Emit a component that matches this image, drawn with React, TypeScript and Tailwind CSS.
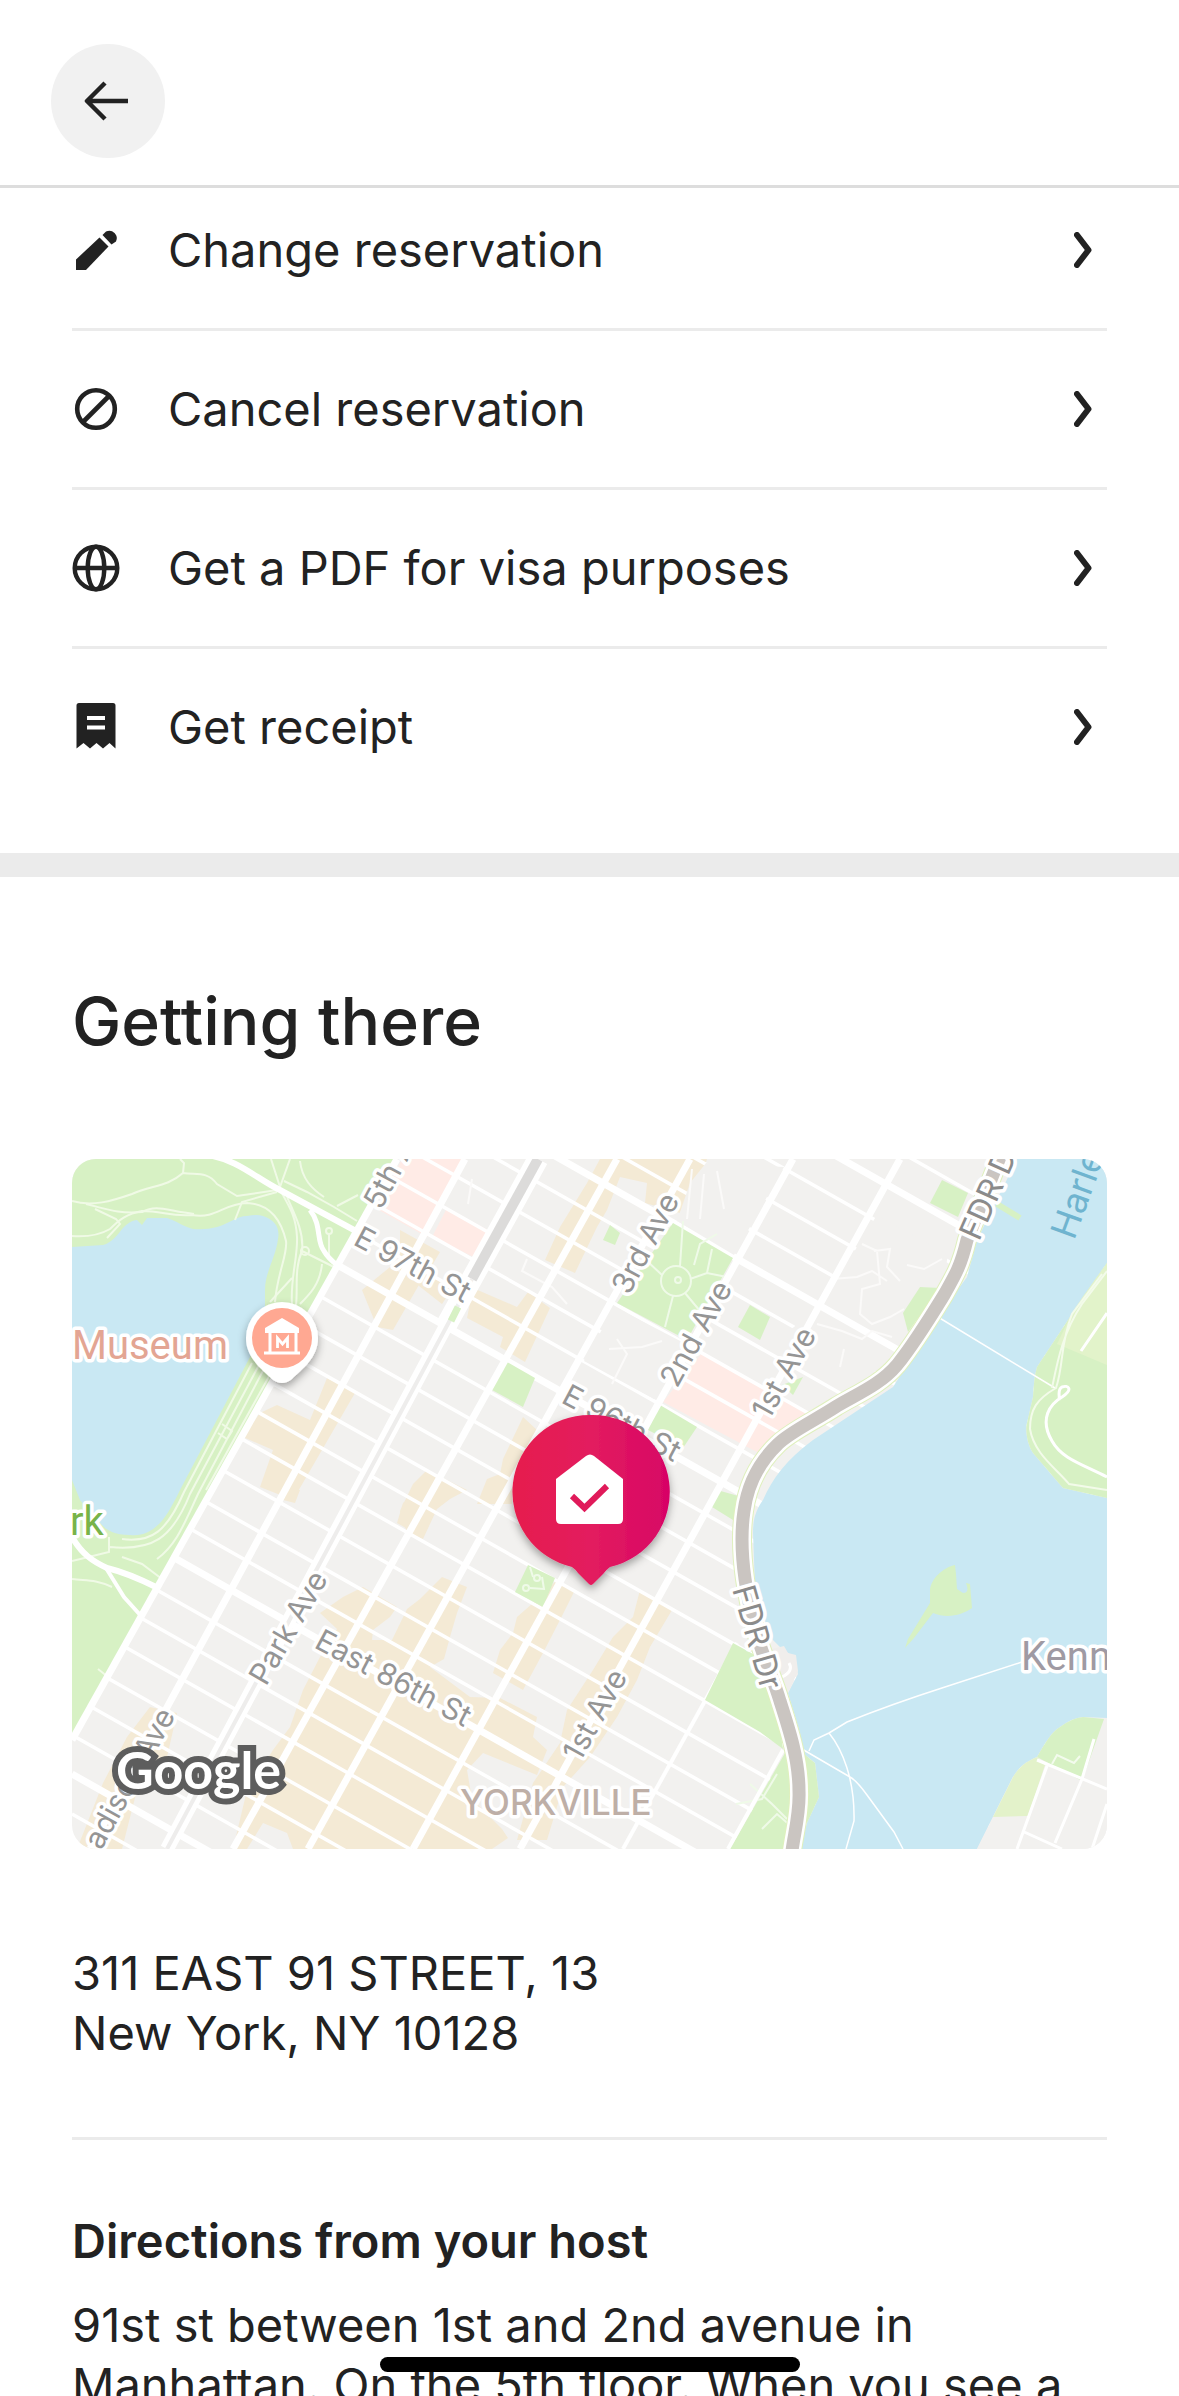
import type { ReactNode } from "react";

const PencilIcon = () => (
  <svg viewBox="0 0 48 48" className="h-12 w-12" fill="currentColor" aria-hidden="true">
    <path d="M4 44V33.500L27.500 11.500L36.500 20.500L14 44Z" />
    <path d="M30.500 9L34 5.500a7.500 7.500 0 0 1 10 10L39.500 18.500Z" />
  </svg>
);

const BlockIcon = () => (
  <svg viewBox="0 0 48 48" className="h-12 w-12" fill="none" stroke="currentColor" strokeWidth="4.600" aria-hidden="true">
    <circle cx="24" cy="24" r="18.800" />
    <path d="M37.500 10.500L10.500 37.500" />
  </svg>
);

const GlobeIcon = () => (
  <svg viewBox="0 0 48 48" className="h-12 w-12" fill="none" stroke="currentColor" strokeWidth="4.400" aria-hidden="true">
    <circle cx="24" cy="24" r="21.300" />
    <ellipse cx="24" cy="24" rx="8.300" ry="21.300" />
    <path d="M3 24H45" />
  </svg>
);

const ReceiptIcon = () => (
  <svg viewBox="0 0 48 48" className="h-12 w-12" aria-hidden="true">
    <path
      d="M4.500 2.500a2.500 2.500 0 0 1 2.500-2.500h34a2.500 2.500 0 0 1 2.500 2.500V45.500L37.500 40L31 45.500L24.500 40L18 45.500L11.500 40L4.500 45.500Z"
      fill="currentColor"
    />
    <path d="M15 15H33M15 24.500H33" stroke="#fff" strokeWidth="3.800" />
  </svg>
);

const ChevronIcon = () => (
  <svg viewBox="0 0 18 36" className="h-9 w-[18px] shrink-0" fill="none" stroke="currentColor" strokeWidth="6" strokeLinecap="round" strokeLinejoin="round" aria-hidden="true">
    <path d="M3 3L14.500 18L3 33" />
  </svg>
);

const actions: { icon: () => ReactNode; label: string }[] = [
  { icon: PencilIcon, label: "Change reservation" },
  { icon: BlockIcon, label: "Cancel reservation" },
  { icon: GlobeIcon, label: "Get a PDF for visa purposes" },
  { icon: ReceiptIcon, label: "Get receipt" },
];

// Cross streets, given as the height at which each one meets the left edge
const streets = [
  -475, -393, -353, -313, -240, -200, -162, -126, -87, -3, 35, 73, 111, 148,
  184, 226, 267, 303, 383, 420, 458, 499, 537, 576, 655,
];
const wideStreets = [-435, -276, -44, 341, 615];

const avenues = [
  "M393 0L18 690",
  "M545 0L161 690",
  "M618 0L236 690",
  "M721 0L341 690",
  "M828 0L448 690",
];

const commercial = [
  "318,108 348,124 321,171 305,168 290,131",
  "328,71 368,93 355,115 380,130 370,145 328,112",
  "401,129 445,148 456,133 478,149 453,203 428,188 431,178 395,159",
  "528,0 635,0 628,24 618,31 608,54 573,44 575,24 548,18 535,51 525,68 503,114 473,101 488,68 515,24",
  "255,219 283,234 221,341 188,328 201,291 171,278 188,254 205,246 238,261",
  "218,331 228,331 223,344 211,341",
  "451,258 465,271 458,285 440,315 440,345 405,345 415,320 428,315 431,300",
  "355,311 395,331 378,340 365,350 351,380 335,374 328,352 341,325",
  "348,331 331,344 325,364 348,377",
  "370,418 395,428 385,454 378,478 372,500 358,508 398,538 428,539 465,558 461,578 475,591 465,616 411,594 395,611 400,640 430,670 436,679 420,690 221,690 215,674 191,664 175,690 161,690 175,631 201,591 218,568 231,531 248,498 265,470 248,454 271,438 291,428 325,448 318,458 301,471 300,481 320,481 335,450 348,440",
  "485,421 503,431 488,461 471,494 451,531 421,514 428,491 441,474 445,458 461,444",
  "568,431 600,451 578,488 565,521 545,558 518,598 491,628 475,681 445,681 461,624 488,584 495,551 521,511 541,478 561,458",
  "78,548 105,554 95,598 65,631 50,690 5,690 31,624 55,578",
];

const hospitals = [
  "330,0 391,0 355,78 305,50",
  "375,49 420,73 408,101 360,78",
  "630,194 678,223 745,258 695,298 681,291 591,243",
];

const parks = [
  "601,64 661,99 615,181 545,144",
  "435,203 463,219 451,248 420,231",
  "588,246 625,268 611,289 576,271",
  "678,146 698,158 688,181 666,168",
  "538,66 548,74 543,86 531,81",
  "456,406 483,419 471,448 443,433",
  "661,484 690,500 700,520 711,590 688,573 633,541",
  "870,21 896,34 886,58 858,44",
  "848,128 868,129 836,173 831,154",
  "645,331 670,338 661,361 640,348",
  "713,594 721,631 721,690 658,690",
  "731,218 721,236 710,226",
];

const FDR =
  "M928 -2L895 81C889 106 884 115 872 136C856 162 842 185 825 206C808 226 785 235 765 247C742 262 718 273 706 285C685 305 675 330 672 352C667 385 672 425 682 465C689 495 700 515 708 542C717 570 727 600 727 632C728 655 722 675 720 692";

const streetLabels = [
  { text: "5th A", x: 309, y: 52, angle: -62 },
  { text: "E 97th St", x: 280, y: 85, angle: 28 },
  { text: "3rd Ave", x: 557, y: 137, angle: -62 },
  { text: "2nd Ave", x: 605, y: 230, angle: -61 },
  { text: "1st Ave", x: 697, y: 262, angle: -61 },
  { text: "E 96th St", x: 488, y: 243, angle: 28 },
  { text: "Park Ave", x: 194, y: 528, angle: -60 },
  { text: "East 86th St", x: 241, y: 488, angle: 28 },
  { text: "1st Ave", x: 508, y: 604, angle: -61 },
  { text: "adison Ave", x: 29, y: 692, angle: -61 },
];

const driveLabels = [
  { text: "FDR D", x: 907, y: 83, angle: -66 },
  { text: "FDR Dr", x: 660, y: 430, angle: 74 },
];

const Map = () => (
  <svg
    viewBox="0 0 1035 690"
    role="img"
    aria-label="Map of Yorkville, New York"
    className="block h-auto w-full rounded-3xl"
  >
    <defs>
      <linearGradient id="pin" x1="0" x2="1" y1="0" y2="0">
        <stop offset="0" stopColor="#e61e4d" />
        <stop offset="0.500" stopColor="#e31c5f" />
        <stop offset="1" stopColor="#d70466" />
      </linearGradient>
      <filter id="shadow" x="-30%" y="-30%" width="160%" height="160%">
        <feDropShadow dx="0" dy="4" stdDeviation="4" floodColor="#000" floodOpacity="0.350" />
      </filter>
    </defs>

    {/* Land */}
    <rect width="1035" height="690" fill="#f2f1ef" />
    {commercial.map((points) => (
      <polygon key={points} points={points} fill="#f4ead5" />
    ))}
    {hospitals.map((points) => (
      <polygon key={points} points={points} fill="#ffebe6" />
    ))}

    {/* Streets */}
    <g stroke="#fff" fill="none">
      {streets.map((y) => (
        <path key={y} d={`M0 ${y}L1035 ${y + 585}`} strokeWidth="3.500" />
      ))}
      {wideStreets.map((y) => (
        <path key={y} d={`M0 ${y}L1035 ${y + 585}`} strokeWidth="7" />
      ))}
      <path d="M665 484L551 690" strokeWidth="4" />
    </g>

    {/* Housing blocks without through streets */}
    <polygon points="634,4 712,8 662,96 605,62 618,24" fill="#f2f1ef" />
    <polygon points="543,148 612,184 582,240 512,202" fill="#f2f1ef" />
    <polygon points="805,56 876,96 870,128 825,182 751,143" fill="#f2f1ef" />
    <polygon points="742,153 820,192 795,222 765,212 706,180" fill="#f2f1ef" />
    <g fill="none" stroke="#fbfaf9" strokeWidth="2">
      <path d="M790 85L805 92L808 125L790 130L788 155L800 165L818 158L832 150M802 92L818 90L815 108L828 122M760 120L785 118L800 112L815 122M835 106L852 110L870 100M745 165L770 172L790 180L800 172L820 178M768 208L772 190" />
      <path d="M545 180L555 195L540 225M537 190L570 188L590 182M620 10L615 60M632 15L628 60M645 12L652 50M400 20L396 45M455 100L450 112L480 128L495 145" />
    </g>
    {parks.map((points) => (
      <polygon key={points} points={points} fill="#d7f1c4" />
    ))}
    <g fill="none" stroke="#effae8" strokeWidth="2">
      <circle cx="604" cy="122" r="15" />
      <circle cx="606" cy="121" r="3" />
      <path d="M611 62L608 107M618 120L635 114L655 118M635 114L640 90M622 106L628 85L645 75M590 116L575 102M601 137L593 168M613 134L628 152" />
      <circle cx="454" cy="429" r="3" />
      <circle cx="465" cy="419" r="3" />
      <path d="M458 429L472 430L470 418M461 418L458 408M678 625L700 645L715 660M690 670L705 655L720 668M664 645L690 640L705 615" />
    </g>

    {/* Avenues */}
    <g stroke="#fff" strokeWidth="7" fill="none">
      {avenues.map((d) => (
        <path key={d} d={d} />
      ))}
      <path d="M466 0L375 165" strokeWidth="21" />
      <path d="M375 165L95 690" strokeWidth="14" />
      <path d="M711 591L656 690" strokeWidth="4" />
    </g>
    <path d="M466 0L400 120" stroke="#dcdbda" strokeWidth="10" />
    <path d="M400 120L95 690" stroke="#eeedec" strokeWidth="4" />
    <path d="M386 148L379 162" stroke="#d7f1c4" strokeWidth="7" />

    {/* Central Park */}
    <path d="M0 0H325L0 579Z" fill="#d7f1c4" />
    <path
      d="M0 88L31 86C40 84 46 75 51 69C55 65 60 61 65 61L70 66L75 59L95 59C105 62 112 68 121 70Q134 71 145 68C156 65 165 57 175 57Q185 55 191 57C204 61 208 70 206 80C204 98 193 113 193 131V158L178 198L108 331C99 350 92 360 88 364C78 374 70 377 58 376C42 376 34 371 28 364C18 352 12 346 8 341L0 321Z"
      fill="#c9e8f3"
    />
    <g fill="none" stroke="#f0fae6" strokeWidth="2">
      <path d="M0 42C20 48 40 42 60 35C80 26 95 28 111 14C125 16 135 12 145 25L165 37L205 31" />
      <path d="M0 77C15 78 28 76 38 70C48 60 55 55 70 52C90 52 100 58 120 56C145 60 150 45 175 44C200 45 210 65 214 82C216 95 205 115 203 143" />
      <path d="M14 45C35 50 45 55 70 53C85 45 95 52 122 55M111 14L112 4L108 0M23 50L44 60L48 65L35 79M163 61L170 43L205 33" />
      <path d="M199 0L208 28L218 0M209 32C215 45 224 55 225 78C226 98 218 120 220 146M215 38C225 60 232 75 230 92C222 110 226 130 224 146M230 92L250 102L262 108M250 105C248 125 238 135 228 145M198 143L220 119" />
      <path d="M228 2C230 20 240 30 252 38M212 22L235 33L262 48L285 62M265 47L286 36M257 75V100" />
      <circle cx="233" cy="92" r="4" />
      <circle cx="257" cy="72" r="3" />
      <path d="M180 204L112 333C95 372 80 384 50 380M187 206L118 335C100 380 80 392 38 388M193 208L126 335C112 365 105 385 85 400M200 212L134 331M150 265L160 272L155 280L146 274M37 378V393L0 402M0 420C15 422 22 420 40 428M50 398L70 405L90 420M26 510L36 518" />
    </g>
    <g fill="none" stroke="#fff">
      <path d="M135 -4C165 0 185 20 208 31L282 71" strokeWidth="6" />
      <path d="M238 51C250 66 244 82 252 92Q256 99 265 106" strokeWidth="5" />
      <path d="M0 378C10 395 20 402 35 409C52 413 68 420 86 429" strokeWidth="6" />
      <path d="M34 409L52 438L70 458" strokeWidth="4" />
      <path d="M325 0L0 581" strokeWidth="7" />
    </g>

    {/* East River and Randall's Island */}
    <path
      d="M945 0L905 81L895 118L866 158L821 228L741 281C715 300 700 320 691 341C683 352 681 362 681 374L683 428L698 478L710 490L722 498L726 515L716 534L728 574L731 594L743 604L747 638L735 664L728 690H905L921 658L941 618C948 606 956 602 965 598C972 586 980 572 988 568Q1000 559 1011 558L1035 559V339L991 329L961 294C955 285 953 270 955 264L961 238Q962 218 965 208L998 158C1010 140 1025 118 1035 104V0Z"
      fill="#c9e8f3"
    />
    <path d="M1035 559V690H905L921 658L941 618L965 598L1011 559Z" fill="#f2f1ef" />
    <path d="M1035 104C1025 118 1010 140 998 158L965 208Q962 218 961 238L955 264C953 270 955 285 961 294L991 329L1035 339Z" fill="#d7f1c4" />
    <path d="M1035 104C1025 118 1005 145 998 158L985 185L1035 206Z" fill="#e2f3ca" />
    <path d="M883 406C872 408 858 420 858 432V444L836 480L833 489L842 479L861 454C875 460 890 456 900 449L898 425L894 424Q898 434 891 434L885 430L884 415Z" fill="#d7f1c4" />
    <path d="M941 618C948 606 956 602 965 598L973 606L956 657L921 658Z" fill="#e3f2ca" />
    <path d="M965 598C972 586 980 572 988 568Q1000 559 1011 558L1032 560L1010 622Z" fill="#d7f1c4" />
    <path d="M925 45L948 59" stroke="#d7f1c4" strokeWidth="6" />
    <path d="M731 594L743 604L747 638L735 664L726 655V600Z" fill="#d7f1c4" />
    <path d="M700 490L712 487L716 494L724 496L726 512L716 534L706 528Z" fill="#f0eeec" />
    <g fill="none" stroke="#fff">
      <path d="M866 158L983 229" strokeWidth="1.500" />
      <path d="M1035 112L1010 145C990 175 985 205 980 229M1030 115L1000 155C988 185 992 205 984 229C965 240 958 250 958 270C962 295 985 310 997 325L1035 331" stroke="#f3fbea" strokeWidth="2" />
      <path d="M1035 318C1010 305 990 300 980 282C967 260 978 245 990 238C1002 230 996 226 990 228C985 231 988 236 987 241M1009 192L1035 154" strokeWidth="3" />
      <path d="M950 503L873 528Q820 545 775 563L757 574L742 581L737 592M757 574C770 590 783 620 782 662L774 690M730 590L778 618Q785 622 795 636L822 673L831 690" strokeWidth="1.500" />
      <path d="M965 601L1035 630M975 607L945 690M1022 580L1010 620L983 684M950 672L990 690M1035 645L1020 690" strokeWidth="3" />
      <path d="M980 605L985 596L1002 604L1008 597" strokeWidth="2" opacity="0.700" />
      <path d="M717 504Q722 512 710 518" strokeWidth="3" />
    </g>

    {/* FDR Drive */}
    <path d={FDR} fill="none" stroke="#dff0bd" strokeWidth="20" />
    <path d={FDR} fill="none" stroke="#fff" strokeWidth="18" />
    <path d={FDR} fill="none" stroke="#cac5c1" strokeWidth="13" />

    {/* Labels */}
    <g stroke="#fff" strokeWidth="7" strokeLinejoin="round" className="[paint-order:stroke]">
      <g fill="#959595" fontSize="30">
        {streetLabels.map(({ text, x, y, angle }) => (
          <text key={`${text}${x}`} transform={`translate(${x} ${y}) rotate(${angle})`}>
            {text}
          </text>
        ))}
      </g>
      <g fill="#8b8b8b" fontSize="32">
        {driveLabels.map(({ text, x, y, angle }) => (
          <text key={text} transform={`translate(${x} ${y}) rotate(${angle})`}>
            {text}
          </text>
        ))}
      </g>
      <text x="388" y="656" fontSize="35" fontWeight="500" fill="#beafa7">
        YORKVILLE
      </text>
      <g fontSize="40" className="font-[Roboto,sans-serif]">
        <text x="0" y="200" fill="#e3a593">
          Museum
        </text>
        <text x="949" y="511" fill="#9f9aa3">
          Kenn
        </text>
        <text x="-2" y="376" fill="#78b34a">
          rk
        </text>
      </g>
    </g>
    <text fontSize="36" fill="#6fb4cf" transform="translate(1002 82) rotate(-70)">
      Harle
    </text>

    {/* Museum marker */}
    <g filter="url(#shadow)">
      <path d="M210 143a36 36 0 0 1 36 36C246 199 230 210 220 220Q210 228 200 220C190 210 174 199 174 179A36 36 0 0 1 210 143Z" fill="#fff" />
    </g>
    <circle cx="210" cy="179" r="30" fill="#ffa892" />
    <path d="M210 159L227 169V174H193V169Z" fill="#fff" />
    <path d="M198 173V193M224 173V193M192 194H228" stroke="#fff" strokeWidth="3" />
    <path d="M205.500 189V179L210.500 185L215.500 179V189" fill="none" stroke="#fff" strokeWidth="2.800" />

    {/* Home marker */}
    <path
      d="M518 256A77 77 0 0 1 538 408Q534 411 532 414L521 425Q519 427 517 425L506 414Q503 410 500 408A77 77 0 0 1 518 256Z"
      fill="url(#pin)"
      filter="url(#shadow)"
    />
    <path d="M514 297Q518 294 522 297L551 320V360Q551 365 546 365H489Q484 365 484 360V320Z" fill="#fff" />
    <path d="M500 337L512.500 349L535 327" fill="none" stroke="#e01a5a" strokeWidth="6" />

    <text
      x="44"
      y="630"
      fontSize="52"
      fontWeight="700"
      fill="#fff"
      stroke="#5d5d5d"
      strokeWidth="12"
      className="font-[Lato,sans-serif] [paint-order:stroke]"
    >
      Google
    </text>
  </svg>
);

const App = () => {
  return (
    <div className="relative h-screen overflow-hidden bg-white font-[Inter,sans-serif] text-[47px] leading-[60px] text-[#222222]">
      <header className="relative z-10 border-b-[3px] border-[#dddddd] bg-white pt-11 pb-[27px] pl-[51px]">
        <button
          type="button"
          aria-label="Back"
          className="flex h-[114px] w-[114px] items-center justify-center rounded-full bg-[#f1f1f1]"
        >
          <svg viewBox="0 0 48 48" className="h-12 w-12" fill="none" stroke="currentColor" strokeWidth="4.500" strokeLinejoin="round" aria-hidden="true">
            <path d="M44 24H3M21 6L3 24L21 42" />
          </svg>
        </button>
      </header>

      <main>
        {/* Slides under the header, as the page is scrolled a little */}
        <ul className="-mt-4 px-[72px] pb-12">
          {actions.map(({ icon: Icon, label }) => (
            <li key={label} className="border-b-[3px] border-[#ebebeb] last:border-b-0">
              <button type="button" className="flex h-[156px] w-full items-center gap-12 pr-[15px] text-left">
                <Icon />
                <span className="flex-1">{label}</span>
                <ChevronIcon />
              </button>
            </li>
          ))}
        </ul>

        <div className="h-6 bg-[#ebebeb]" />

        <section className="px-[72px] pt-[104px]">
          <h2 className="text-[66px] leading-[80px] font-medium">Getting there</h2>
          <div className="mt-[98px]">
            <Map />
          </div>
          <address className="mt-[94px] border-b-[3px] border-[#ebebeb] pb-[74px] not-italic">
            311 EAST 91 STREET, 13
            <br />
            New York, NY 10128
          </address>
          <h3 className="mt-[71px] font-semibold">Directions from your host</h3>
          <p className="mt-6">91st st between 1st and 2nd avenue in Manhattan. On the 5th floor. When you see a</p>
        </section>
      </main>

      {/* Home indicator */}
      <div className="absolute bottom-6 left-1/2 z-20 h-[15px] w-[420px] -translate-x-1/2 rounded-full bg-black" />
    </div>
  );
};

export default App;
